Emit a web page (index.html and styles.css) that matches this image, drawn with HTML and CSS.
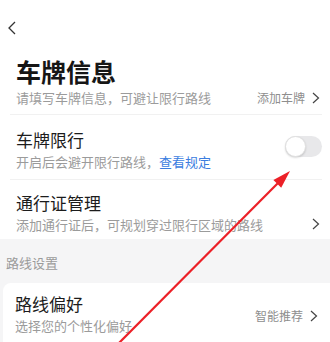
FILE: index.html
```html
<!DOCTYPE html>
<html lang="zh-CN">
<head>
<meta charset="utf-8">
<link rel="stylesheet" href="styles.css">
</head>
<body>
<div class="page">
  <div class="nav">
    <svg class="back" width="10" height="14" viewBox="0 0 10 14"><path d="M8 1 L2 7 L8 13" fill="none" stroke="#333" stroke-width="1.3"/></svg>
  </div>
  <div class="white">
    <div class="head">
      <div class="title">车牌信息</div>
      <div class="line">
        <span class="sub">请填写车牌信息，可避让限行路线</span>
        <span class="more">添加车牌<svg class="chev" width="8" height="12" viewBox="0 0 8 12"><path d="M1 1 L6.5 6 L1 11" fill="none" stroke="#444" stroke-width="1.2"/></svg></span>
      </div>
    </div>
    <div class="row row1">
      <div class="texts">
        <div class="label">车牌限行</div>
        <div class="sub">开启后会避开限行路线，<span class="link">查看规定</span></div>
      </div>
      <div class="toggle"><div class="knob"></div></div>
    </div>
    <div class="row row2">
      <div class="texts">
        <div class="label">通行证管理</div>
        <div class="sub">添加通行证后，可规划穿过限行区域的路线</div>
      </div>
      <svg class="chev end" width="8" height="12" viewBox="0 0 8 12"><path d="M1 1 L6.5 6 L1 11" fill="none" stroke="#444" stroke-width="1.2"/></svg>
    </div>
  </div>
  <div class="section">路线设置</div>
  <div class="card">
    <div class="texts">
      <div class="label">路线偏好</div>
      <div class="sub">选择您的个性化偏好</div>
    </div>
    <span class="more pref">智能推荐<svg class="chev" width="8" height="12" viewBox="0 0 8 12"><path d="M1 1 L6.5 6 L1 11" fill="none" stroke="#444" stroke-width="1.2"/></svg></span>
  </div>
  <svg class="arrow" width="330" height="342" viewBox="0 0 330 342">
    <line x1="118" y1="344" x2="280" y2="181" stroke="#ec2027" stroke-width="2.2"/>
    <polygon points="290,171 281.2,187.7 273.4,179.9" fill="#ec2027"/>
  </svg>
</div>
</body>
</html>
```
FILE: styles.css
```css
html, body {
  margin: 0;
  padding: 0;
  background: #f5f5f6;
}
.page {
  position: relative;
  width: 330px;
  height: 342px;
  overflow: hidden;
  font-family: "Noto Sans CJK SC", "Noto Sans", sans-serif;
  color: #1c1c1c;
  background: #f5f5f6;
}
.nav {
  height: 56px;
  box-sizing: border-box;
  padding: 21px 0 0 7px;
  background: #fff;
}
.back { display: block; }
.white {
  background: #fff;
  padding: 0 8px 0 10px;
}
.head {
  padding: 0 0 7px 6px;
  border-bottom: 1px solid #f1f1f1;
}
.title {
  font-size: 25px;
  line-height: 30px;
  font-weight: 700;
  color: #161616;
}
.line {
  display: flex;
  justify-content: space-between;
  align-items: center;
  margin-top: 3px;
}
.sub {
  font-size: 13px;
  line-height: 18px;
  color: #9b9b9b;
}
.more {
  display: flex;
  align-items: center;
  font-size: 12px;
  line-height: 18px;
  color: #8e8e8e;
  margin-right: 2px;
}
.chev { display: block; margin-left: 7px; }
.row {
  display: flex;
  justify-content: space-between;
  padding-left: 6px;
}
.row1 {
  padding-top: 14px;
  padding-bottom: 8px;
  border-bottom: 1px solid #f1f1f1;
  align-items: flex-start;
}
.row2 {
  padding-top: 12px;
  padding-bottom: 5px;
  align-items: flex-end;
}
.row2 .end { margin-right: 2px; margin-bottom: 4px; }
.label {
  font-size: 17px;
  line-height: 22px;
  color: #1c1c1c;
}
.texts .sub { margin-top: 2px; }
.link { color: #3b7ddf; }
.toggle {
  width: 37px;
  height: 21px;
  margin-top: 7px;
  border-radius: 11px;
  background: #e8e8ea;
  position: relative;
}
.knob {
  position: absolute;
  left: 0;
  top: 0;
  width: 21px;
  height: 21px;
  box-sizing: border-box;
  border-radius: 50%;
  background: #fff;
  border: 1px solid #e0e0e0;
  box-shadow: 0 1px 2px rgba(0,0,0,0.15);
}
.section {
  padding: 15px 0 11px 6px;
  font-size: 13px;
  line-height: 18px;
  color: #9b9b9b;
}
.card {
  margin-left: 3px;
  background: #fff;
  border-radius: 8px 0 0 0;
  padding: 10px 0 10px 12px;
  display: flex;
  justify-content: space-between;
  align-items: flex-start;
}
.pref {
  margin-top: 14px;
  margin-right: 12px;
}
.arrow {
  position: absolute;
  left: 0;
  top: 0;
}
```
